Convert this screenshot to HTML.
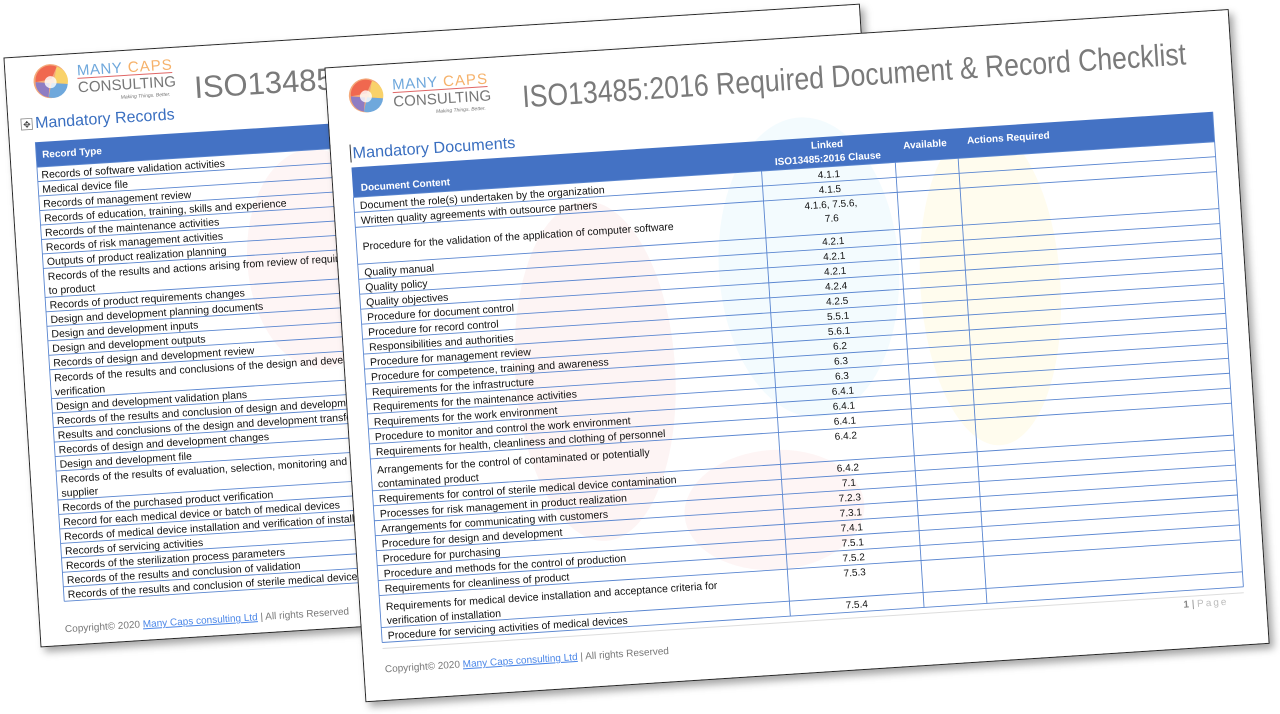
<!DOCTYPE html>
<html><head><meta charset="utf-8"><style>
html,body{margin:0;padding:0;background:#fff;width:1280px;height:714px;overflow:hidden}
svg{display:block}
text{font-family:"Liberation Sans",sans-serif}
.r{font-size:10.5px;fill:#111}
.c{font-size:10px;fill:#111;text-anchor:middle}
.h{font-size:10px;fill:#fff;font-weight:bold}
.t{font-size:31px;fill:#7a7a7a}
.m{font-size:16px;fill:#3a6fc0}
.f{font-size:10px;fill:#777}
.ln{stroke:#5a86d0;stroke-width:0.9}
</style></head><body>
<svg width="1280" height="714" viewBox="0 0 1280 714" xmlns="http://www.w3.org/2000/svg">
<defs>
<filter id="sh" x="-5%" y="-5%" width="115%" height="115%"><feDropShadow dx="4" dy="5" stdDeviation="4" flood-color="#000" flood-opacity="0.35"/></filter>
<g id="logo">
<circle cx="19" cy="20" r="17" fill="#f4a97a"/>
<path d="M4,20 A15,15 0 0,1 26,6 L20,18 Z" fill="#f0684f"/>
<path d="M26,6 A15,15 0 0,1 36,24 L22,22 Z" fill="#f9d26a"/>
<path d="M36,24 A15,15 0 0,1 16,36 L20,22 Z" fill="#6fa8dc"/>
<path d="M16,36 A15,15 0 0,1 4,20 L18,22 Z" fill="#8e7cc3"/>
<circle cx="19" cy="21" r="6" fill="#fff" opacity="0.8"/>
<text x="46" y="16" font-size="15" fill="#6fa8dc" textLength="45">MANY</text>
<text x="97" y="16" font-size="15" fill="#f6b26b" textLength="44">CAPS</text>
<line x1="46" y1="19" x2="141" y2="19" stroke="#e06666" stroke-width="1"/>
<text x="46" y="33" font-size="15" fill="#777" textLength="98">CONSULTING</text>
<text x="88" y="42" font-size="5" fill="#777" font-style="italic">Making Things. Better.</text>
</g>
</defs>

<!-- BACK PAGE -->
<g transform="translate(4,58) rotate(-3.6)">
<rect x="0" y="0" width="857" height="590" fill="#fff" stroke="#222" stroke-width="1" filter="url(#sh)"/>
<ellipse cx="300" cy="220" rx="70" ry="110" fill="#fdeeee" opacity="0.6"/>
<use href="#logo" x="26" y="6"/>
<text class="t" x="188" y="52">ISO13485:2016 Required Document &amp; Record Checklist</text>
<rect x="13" y="62" width="11" height="11" fill="#fff" stroke="#888" stroke-width="0.8"/>
<text x="15" y="71" font-size="9" fill="#444">✥</text>
<text class="m" x="27" y="72">Mandatory Records</text>
<rect x="26" y="86" width="820" height="25" fill="#4472c4"/>
<text class="h" x="32" y="102">Record Type</text>
<g class="ln">
<line x1="26" y1="111" x2="846" y2="111"/><line x1="26" y1="125.5" x2="846" y2="125.5"/><line x1="26" y1="140" x2="846" y2="140"/><line x1="26" y1="154.5" x2="846" y2="154.5"/><line x1="26" y1="169" x2="846" y2="169"/><line x1="26" y1="183.5" x2="846" y2="183.5"/><line x1="26" y1="198" x2="846" y2="198"/><line x1="26" y1="212.5" x2="846" y2="212.5"/><line x1="26" y1="241.5" x2="846" y2="241.5"/><line x1="26" y1="256" x2="846" y2="256"/><line x1="26" y1="270.5" x2="846" y2="270.5"/><line x1="26" y1="285" x2="846" y2="285"/><line x1="26" y1="299.5" x2="846" y2="299.5"/><line x1="26" y1="314" x2="846" y2="314"/><line x1="26" y1="343" x2="846" y2="343"/><line x1="26" y1="357.5" x2="846" y2="357.5"/><line x1="26" y1="372" x2="846" y2="372"/><line x1="26" y1="386.5" x2="846" y2="386.5"/><line x1="26" y1="401" x2="846" y2="401"/><line x1="26" y1="415.5" x2="846" y2="415.5"/><line x1="26" y1="444.5" x2="846" y2="444.5"/><line x1="26" y1="459" x2="846" y2="459"/><line x1="26" y1="473.5" x2="846" y2="473.5"/><line x1="26" y1="488" x2="846" y2="488"/><line x1="26" y1="502.5" x2="846" y2="502.5"/><line x1="26" y1="517" x2="846" y2="517"/><line x1="26" y1="531.5" x2="846" y2="531.5"/><line x1="26" y1="546" x2="846" y2="546"/>
<line x1="26" y1="86" x2="26" y2="546"/><line x1="846" y1="86" x2="846" y2="546"/>
</g>
<g class="r">
<text x="30" y="122.5">Records of software validation activities</text>
<text x="30" y="137">Medical device file</text>
<text x="30" y="151.5">Records of management review</text>
<text x="30" y="166">Records of education, training, skills and experience</text>
<text x="30" y="180.5">Records of the maintenance activities</text>
<text x="30" y="195">Records of risk management activities</text>
<text x="30" y="209.5">Outputs of product realization planning</text>
<text x="30" y="224.5">Records of the results and actions arising from review of requirements related</text>
<text x="30" y="238.5">to product</text>
<text x="30" y="253">Records of product requirements changes</text>
<text x="30" y="267.5">Design and development planning documents</text>
<text x="30" y="282">Design and development inputs</text>
<text x="30" y="296.5">Design and development outputs</text>
<text x="30" y="311">Records of design and development review</text>
<text x="30" y="326">Records of the results and conclusions of the design and development</text>
<text x="30" y="340">verification</text>
<text x="30" y="354.5">Design and development validation plans</text>
<text x="30" y="369">Records of the results and conclusion of design and development validation</text>
<text x="30" y="383.5">Results and conclusions of the design and development transfer</text>
<text x="30" y="398">Records of design and development changes</text>
<text x="30" y="412.5">Design and development file</text>
<text x="30" y="427.5">Records of the results of evaluation, selection, monitoring and re-evaluation of</text>
<text x="30" y="441.5">supplier</text>
<text x="30" y="456">Records of the purchased product verification</text>
<text x="30" y="470.5">Record for each medical device or batch of medical devices</text>
<text x="30" y="485">Records of medical device installation and verification of installation</text>
<text x="30" y="499.5">Records of servicing activities</text>
<text x="30" y="514">Records of the sterilization process parameters</text>
<text x="30" y="528.5">Records of the results and conclusion of validation</text>
<text x="30" y="543">Records of the results and conclusion of sterile medical device</text>
</g>
<text class="f" x="25" y="577">Copyright© 2020 <tspan fill="#4a86e8" text-decoration="underline">Many Caps consulting Ltd</tspan> | All rights Reserved</text>
</g>

<!-- FRONT PAGE -->
<g transform="translate(325,68) rotate(-3.7)">
<rect x="0" y="0" width="905" height="635" fill="#fff" stroke="#222" stroke-width="1" filter="url(#sh)"/>
<ellipse cx="470" cy="230" rx="90" ry="150" fill="#f2fbfe" opacity="0.9"/>
<ellipse cx="250" cy="320" rx="80" ry="170" fill="#fdf1f1" opacity="0.8"/>
<ellipse cx="650" cy="260" rx="70" ry="160" fill="#fffcec" opacity="0.9"/>
<ellipse cx="420" cy="470" rx="90" ry="60" fill="#fdf1f1" opacity="0.7"/>
<use href="#logo" x="20" y="10"/>
<text class="t" x="195" y="52" textLength="665" lengthAdjust="spacingAndGlyphs">ISO13485:2016 Required Document &amp; Record Checklist</text>
<line x1="20" y1="78" x2="20" y2="96" stroke="#333" stroke-width="1"/>
<text class="m" x="22" y="92" textLength="163" lengthAdjust="spacingAndGlyphs">Mandatory Documents</text>
<rect x="20" y="101" width="863" height="30" fill="#4472c4"/>
<text class="h" x="28" y="125">Document Content</text>
<text class="h" x="496" y="112" text-anchor="middle">Linked</text>
<text class="h" x="496" y="126" text-anchor="middle">ISO13485:2016 Clause</text>
<text class="h" x="572" y="118">Available</text>
<text class="h" x="636" y="117">Actions Required</text>
<g class="ln">
<line x1="20" y1="131" x2="883" y2="131"/><line x1="20" y1="146" x2="883" y2="146"/><line x1="20" y1="161" x2="883" y2="161"/><line x1="20" y1="198" x2="883" y2="198"/><line x1="20" y1="213" x2="883" y2="213"/><line x1="20" y1="228" x2="883" y2="228"/><line x1="20" y1="243" x2="883" y2="243"/><line x1="20" y1="258" x2="883" y2="258"/><line x1="20" y1="273" x2="883" y2="273"/><line x1="20" y1="288" x2="883" y2="288"/><line x1="20" y1="303" x2="883" y2="303"/><line x1="20" y1="318" x2="883" y2="318"/><line x1="20" y1="333" x2="883" y2="333"/><line x1="20" y1="348" x2="883" y2="348"/><line x1="20" y1="363" x2="883" y2="363"/><line x1="20" y1="378" x2="883" y2="378"/><line x1="20" y1="393" x2="883" y2="393"/><line x1="20" y1="425" x2="883" y2="425"/><line x1="20" y1="440" x2="883" y2="440"/><line x1="20" y1="455" x2="883" y2="455"/><line x1="20" y1="470" x2="883" y2="470"/><line x1="20" y1="485" x2="883" y2="485"/><line x1="20" y1="500" x2="883" y2="500"/><line x1="20" y1="515" x2="883" y2="515"/><line x1="20" y1="530" x2="883" y2="530"/><line x1="20" y1="562" x2="883" y2="562"/><line x1="20" y1="577" x2="883" y2="577"/>
<line x1="20" y1="131" x2="20" y2="577"/><line x1="429" y1="131" x2="429" y2="577"/><line x1="563" y1="131" x2="563" y2="577"/><line x1="626" y1="131" x2="626" y2="577"/><line x1="883" y1="101" x2="883" y2="577"/>
</g>
<g class="r">
<text x="26" y="143">Document the role(s) undertaken by the organization</text>
<text x="26" y="158">Written quality agreements with outsource partners</text>
<text x="26" y="184">Procedure for the validation of the application of computer software</text>
<text x="26" y="210">Quality manual</text>
<text x="26" y="225">Quality policy</text>
<text x="26" y="240">Quality objectives</text>
<text x="26" y="255">Procedure for document control</text>
<text x="26" y="270">Procedure for record control</text>
<text x="26" y="285">Responsibilities and authorities</text>
<text x="26" y="300">Procedure for management review</text>
<text x="26" y="315">Procedure for competence, training and awareness</text>
<text x="26" y="330">Requirements for the infrastructure</text>
<text x="26" y="345">Requirements for the maintenance activities</text>
<text x="26" y="360">Requirements for the work environment</text>
<text x="26" y="375">Procedure to monitor and control the work environment</text>
<text x="26" y="390">Requirements for health, cleanliness and clothing of personnel</text>
<text x="26" y="408">Arrangements    for       the control       of contaminated or potentially</text>
<text x="26" y="422">contaminated product</text>
<text x="26" y="437">Requirements for control of sterile medical device contamination</text>
<text x="26" y="452">Processes for risk management in product realization</text>
<text x="26" y="467">Arrangements for communicating with customers</text>
<text x="26" y="482">Procedure for design and development</text>
<text x="26" y="497">Procedure for purchasing</text>
<text x="26" y="512">Procedure and methods for the control of production</text>
<text x="26" y="527">Requirements for cleanliness of product</text>
<text x="26" y="545">Requirements for medical device installation and acceptance criteria for</text>
<text x="26" y="559">verification of installation</text>
<text x="26" y="574">Procedure for servicing activities of medical devices</text>
</g>
<g class="c">
<text x="496" y="142">4.1.1</text>
<text x="496" y="157">4.1.5</text>
<text x="496" y="172">4.1.6, 7.5.6,</text>
<text x="496" y="186">7.6</text>
<text x="496" y="209">4.2.1</text>
<text x="496" y="224">4.2.1</text>
<text x="496" y="239">4.2.1</text>
<text x="496" y="254">4.2.4</text>
<text x="496" y="269">4.2.5</text>
<text x="496" y="284">5.5.1</text>
<text x="496" y="299">5.6.1</text>
<text x="496" y="314">6.2</text>
<text x="496" y="329">6.3</text>
<text x="496" y="344">6.3</text>
<text x="496" y="359">6.4.1</text>
<text x="496" y="374">6.4.1</text>
<text x="496" y="389">6.4.1</text>
<text x="496" y="404">6.4.2</text>
<text x="496" y="436">6.4.2</text>
<text x="496" y="451">7.1</text>
<text x="496" y="466">7.2.3</text>
<text x="496" y="481">7.3.1</text>
<text x="496" y="496">7.4.1</text>
<text x="496" y="511">7.5.1</text>
<text x="496" y="526">7.5.2</text>
<text x="496" y="541">7.5.3</text>
<text x="496" y="573">7.5.4</text>
</g>
<line x1="20" y1="583" x2="883" y2="583" stroke="#ddd" stroke-width="1"/>
<text x="822" y="594" font-size="10" fill="#888"><tspan font-weight="bold">1</tspan> | <tspan fill="#bbb" letter-spacing="2">Page</tspan></text>
<text class="f" x="21" y="607">Copyright© 2020 <tspan fill="#4a86e8" text-decoration="underline">Many Caps consulting Ltd</tspan> | All rights Reserved</text>
</g>
</svg>
</body></html>
